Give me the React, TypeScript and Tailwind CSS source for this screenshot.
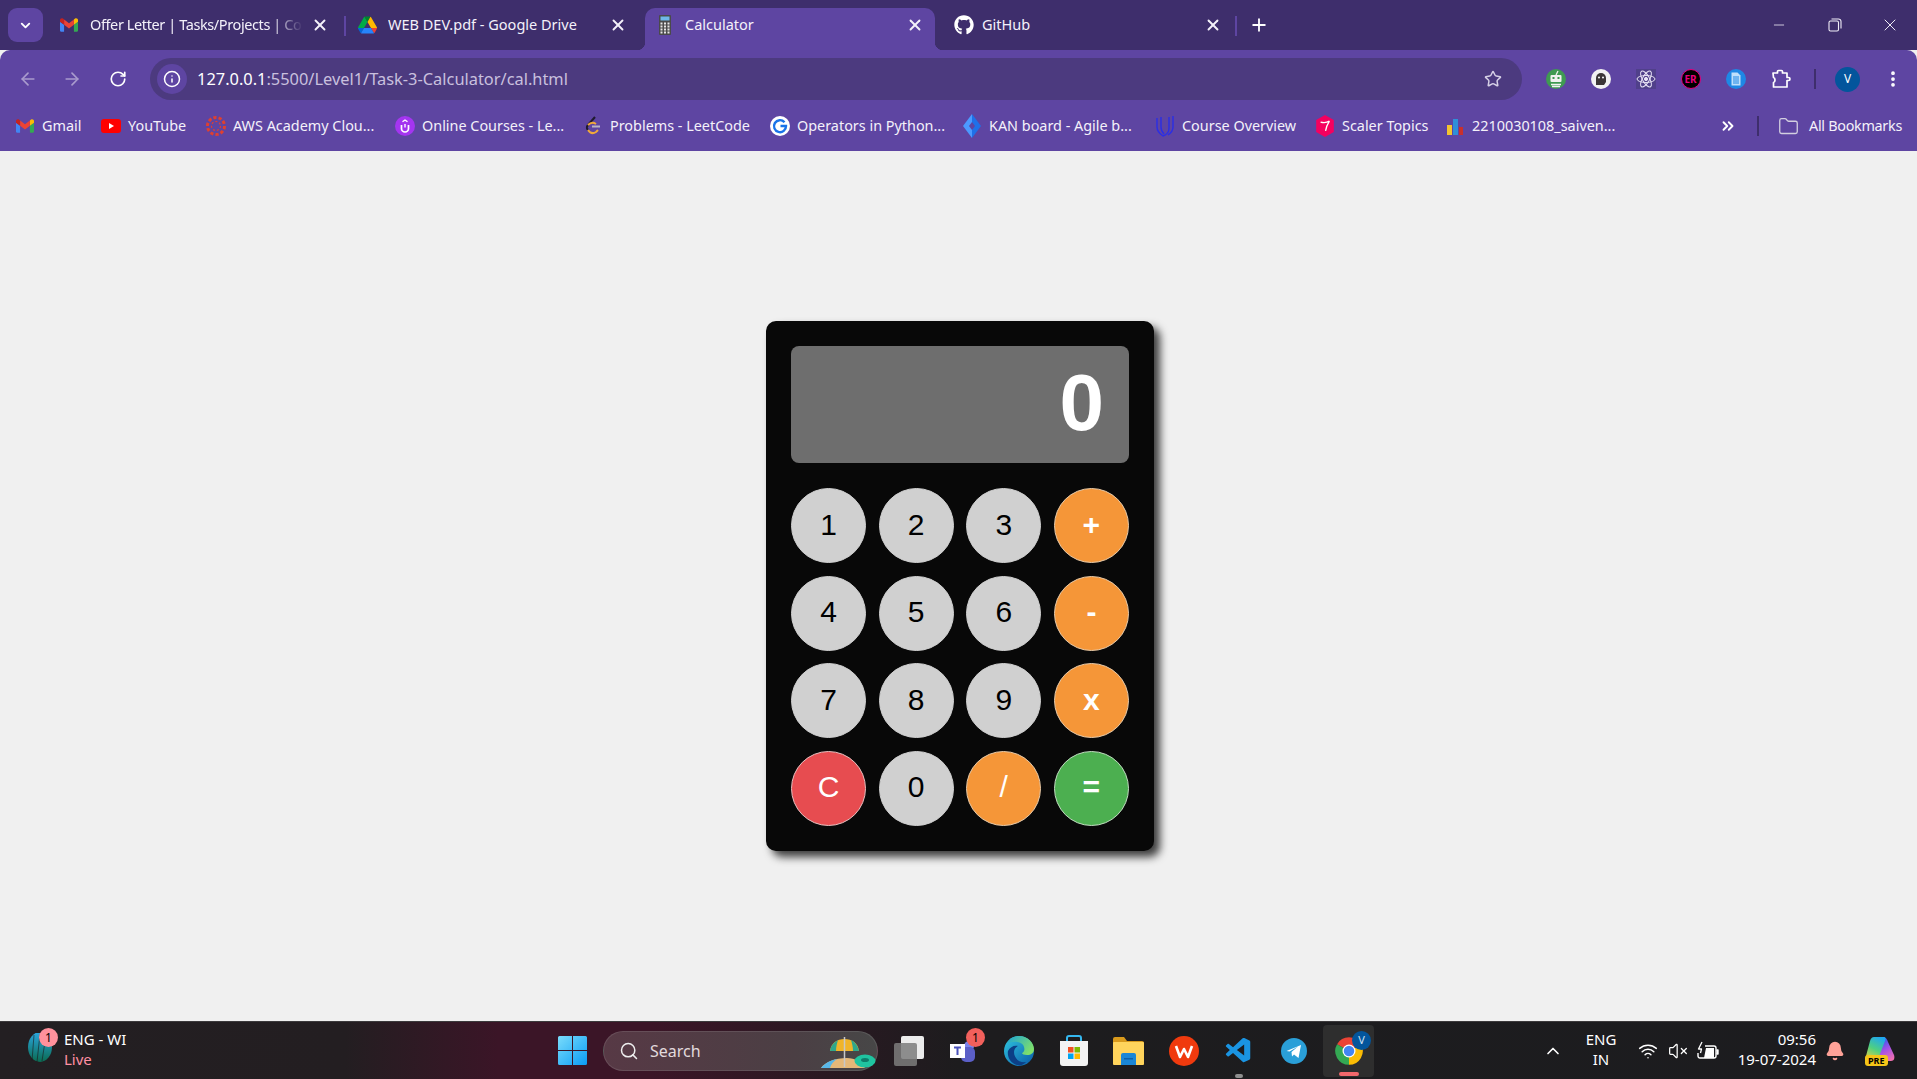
import type { ReactNode } from "react";
import {
  ArrowLeft,
  ArrowRight,
  Bell,
  ChevronDown,
  ChevronUp,
  ChevronsRight,
  EllipsisVertical,
  Folder,
  Info,
  Minus,
  Plus,
  RotateCw,
  Search,
  Star,
  VolumeX,
  Wifi,
  X,
} from "lucide-react";
import { FaGithub } from "react-icons/fa";
import { VscVscode } from "react-icons/vsc";

const Gmail = ({ size = 18 }: { size?: number }) => (
  <svg width={size} height={size} viewBox="52 42 88 66">
    <path fill="#4285f4" d="M58 108h14V74L52 59v43c0 3.32 2.69 6 6 6" />
    <path fill="#34a853" d="M120 108h14c3.32 0 6-2.69 6-6V59l-20 15" />
    <path fill="#fbbc04" d="M120 48v26l20-15v-8c0-7.42-8.47-11.65-14.4-7.2" />
    <path fill="#ea4335" d="M72 74V48l24 18 24-18v26L96 92" />
    <path fill="#c5221f" d="M52 51v8l20 15V48l-5.6-4.2c-5.94-4.45-14.4-.22-14.4 7.2" />
  </svg>
);

const Drive = () => (
  <svg width="19" height="18" viewBox="0 0 87.3 78">
    <path d="m6.6 66.85 3.85 6.65c.8 1.4 1.95 2.5 3.3 3.3l13.75-23.8h-27.5c0 1.55.4 3.1 1.2 4.5z" fill="#0066da" />
    <path d="m43.65 25-13.75-23.8c-1.35.8-2.5 1.9-3.3 3.3l-25.4 44a9.06 9.06 0 0 0 -1.2 4.5h27.5z" fill="#00ac47" />
    <path d="m73.55 76.8c1.35-.8 2.5-1.9 3.3-3.3l1.6-2.75 7.65-13.25c.8-1.4 1.2-2.95 1.2-4.5h-27.502l5.852 11.5z" fill="#ea4335" />
    <path d="m43.65 25 13.75-23.8c-1.35-.8-2.9-1.2-4.5-1.2h-18.5c-1.6 0-3.15.45-4.5 1.2z" fill="#00832d" />
    <path d="m59.8 53h-32.3l-13.75 23.8c1.35.8 2.9 1.2 4.5 1.2h50.8c1.6 0 3.15-.45 4.5-1.2z" fill="#2684fc" />
    <path d="m73.4 26.5-12.7-22c-.8-1.4-1.95-2.5-3.3-3.3l-13.75 23.8 16.15 28h27.45c0-1.55-.4-3.1-1.2-4.5z" fill="#ffba00" />
  </svg>
);

const CalcIcon = () => (
  <svg width="12" height="20" viewBox="0 0 12 20">
    <rect width="12" height="20" rx="1" fill="#4a4a4a" />
    <rect x="1.5" y="1.5" width="9" height="4" fill="#6fb7e8" />
    {[7.5, 10.5, 13.5, 16.5].map((y) =>
      [1.5, 5, 8.5].map((x) => <rect key={`${x}-${y}`} x={x} y={y} width="2" height="2" fill="#e6e6e6" />)
    )}
  </svg>
);

const YouTube = () => (
  <svg width="20" height="14" viewBox="0 0 20 14">
    <rect width="20" height="14" rx="3" fill="#f00" />
    <path d="M8 4l5 3-5 3z" fill="#fff" />
  </svg>
);

const AwsRing = () => (
  <svg width="20" height="20" viewBox="0 0 20 20" fill="none" stroke="#e0402f">
    <circle cx="10" cy="10" r="8.5" strokeWidth="3" strokeDasharray="3.2 2.1" />
    <circle cx="10" cy="10" r="4.5" strokeWidth="1.2" strokeDasharray="2 2" />
  </svg>
);

const OnlineCourses = () => (
  <svg width="20" height="20" viewBox="0 0 20 20">
    <circle cx="10" cy="10" r="10" fill="#a435f0" />
    <path d="M6.5 9v3.5a3.5 3.5 0 0 0 7 0V9" fill="none" stroke="#fff" strokeWidth="1.7" />
    <path d="M10 8V11.5M7.5 5.8L10 4l2.5 1.8" fill="none" stroke="#fff" strokeWidth="1.4" />
  </svg>
);

const LeetCode = () => (
  <svg width="18" height="20" viewBox="0 0 18 20" fill="none" strokeWidth="2">
    <path d="M11 1L4 9" stroke="#1f1a2e" />
    <path d="M4 9c-2 2-1 4 0 5" stroke="#1f1a2e" />
    <path d="M4 14c2 3 5 4 8 2l2-2" stroke="#f0a83a" />
    <path d="M8 10.500h8" stroke="#b9b4c4" />
    <path d="M4 9c2-2 5-3 8-1" stroke="#f0a83a" />
  </svg>
);

const GoogleG = () => (
  <svg width="20" height="20" viewBox="0 0 20 20">
    <circle cx="10" cy="10" r="10" fill="#fff" />
    <path d="M14.5 6.2A6 6 0 1 0 16 10h-5.5" fill="none" stroke="#1a73e8" strokeWidth="2.4" />
  </svg>
);

const KanDiamond = () => (
  <svg width="20" height="24" viewBox="0 0 20 24">
    <path d="M10 0L1 12l9 12z" fill="#4c9aff" />
    <path d="M10 0l9 12-9 12z" fill="#1f70e8" />
    <path d="M10 8l3 4-3 4-3-4z" fill="#5e45a2" />
  </svg>
);

const UShield = () => (
  <svg width="20" height="22" viewBox="0 0 20 22" fill="none" stroke="#2a2ee6" strokeWidth="1.4">
    <path d="M2 3v9c0 4 3 7 6 9 3-1 6-4 6-8V2" />
    <path d="M6 2v10c0 3 1 5 3 7M18 1v11c0 3-2 6-5 8" />
  </svg>
);

const Scaler = () => (
  <svg width="20" height="22" viewBox="0 0 18 20">
    <path d="M9 0l8 4.5v11L9 20l-8-4.5v-11z" fill="#f5005f" />
    <path d="M5 6.5c3 .8 6 .3 8-1-2 3-3 6-3.5 9" fill="none" stroke="#fff" strokeWidth="1.2" />
  </svg>
);

const SheetBars = () => (
  <svg width="18" height="18" viewBox="0 0 18 18">
    <rect x="1" y="8" width="5" height="10" fill="#f4c430" />
    <rect x="7" y="2" width="5" height="16" fill="#2f8fd8" />
    <rect x="13" y="10" width="4" height="8" fill="#c9302c" />
  </svg>
);

const RobotExt = () => (
  <svg width="20" height="20" viewBox="0 0 20 20">
    <circle cx="10" cy="10" r="10" fill="#3f9a52" />
    <rect x="4.5" y="6" width="11" height="7" rx="1" fill="#f1f1f1" />
    <rect x="6.5" y="8" width="2" height="2" fill="#3f9a52" />
    <rect x="11.5" y="8" width="2" height="2" fill="#3f9a52" />
    <path d="M10 6l2-4M5 15.5h10M6 17.5h8" stroke="#f1f1f1" strokeWidth="1.3" />
  </svg>
);

const GhostExt = () => (
  <svg width="20" height="20" viewBox="0 0 20 20">
    <circle cx="10" cy="10" r="10" fill="#f2f2f2" />
    <path d="M5 16V9a5 5 0 0 1 10 0v4l-2 3z" fill="#3b3636" />
    <circle cx="8" cy="8.5" r="1" fill="#fff" />
    <circle cx="12" cy="8.5" r="1" fill="#fff" />
  </svg>
);

const AtomExt = () => (
  <div className="flex size-5 items-center justify-center bg-[#50408a]">
    <svg width="20" height="20" viewBox="0 0 20 20" fill="none" stroke="#e8e3f5" strokeWidth="1">
      <ellipse cx="10" cy="10" rx="9" ry="3.5" />
      <ellipse cx="10" cy="10" rx="9" ry="3.5" transform="rotate(60 10 10)" />
      <ellipse cx="10" cy="10" rx="9" ry="3.5" transform="rotate(120 10 10)" />
      <circle cx="10" cy="10" r="1.6" fill="#e8e3f5" />
    </svg>
  </div>
);

const DocExt = () => (
  <svg width="20" height="20" viewBox="0 0 20 20">
    <circle cx="10" cy="10" r="10" fill="#1e88e5" />
    <path d="M5.5 3.5h6l3 3v10h-9z" fill="#bfe0fb" />
    <path d="M7 8h6M7 10h6M7 12h6M7 14h6" stroke="#1e88e5" strokeWidth="1" />
  </svg>
);

const PuzzleIcon = () => (
  <svg width="20" height="20" viewBox="0 0 20 20" fill="none" stroke="#fff" strokeWidth="1.7" strokeLinejoin="round">
    <path d="M2 4h4.500V2.500a1 1 0 0 1 1-1h3a1 1 0 0 1 1 1V4H16v4.500h1.500a1.500 1.500 0 0 1 0 3H16V18H2.500v-4.500c2-.5 2-4.500 0-5z" />
  </svg>
);

const RestoreIcon = () => (
  <svg width="14" height="14" viewBox="0 0 14 14" fill="none" stroke="#f0edf7" strokeWidth="1.1">
    <rect x="1" y="3" width="9.500" height="10" rx="1.500" />
    <path d="M3.500 1h7a2.500 2.500 0 0 1 2.500 2.500v7" />
  </svg>
);

const WeatherBall = () => (
  <svg width="26" height="30" viewBox="0 0 26 30">
    <defs>
      <linearGradient id="wb" x1="0" y1="0" x2="0" y2="1">
        <stop offset="0" stopColor="#2aa7df" />
        <stop offset="1" stopColor="#0b6b52" />
      </linearGradient>
    </defs>
    <ellipse cx="13" cy="14" rx="12" ry="15" fill="url(#wb)" />
    <path d="M7 2l-2 26M13 1l-3 28M19 2l-4 26" stroke="#1c1a1d" strokeWidth="1" opacity="0.6" />
  </svg>
);

const WindowsLogo = () => (
  <svg width="29" height="29" viewBox="0 0 29 29">
    <defs>
      <linearGradient id="win" x1="0" y1="0" x2="1" y2="1">
        <stop offset="0" stopColor="#7adcfb" />
        <stop offset="1" stopColor="#0a9cf5" />
      </linearGradient>
    </defs>
    <path d="M1.500 0H14v14H0V1.500A1.500 1.500 0 0 1 1.500 0zM15 0h12.500A1.500 1.500 0 0 1 29 1.500V14H15zM0 15h14v14H1.500A1.500 1.500 0 0 1 0 27.500zM15 15h14v12.500a1.500 1.500 0 0 1-1.500 1.500H15z" fill="url(#win)" />
  </svg>
);

const BeachIcon = () => (
  <svg width="56" height="32" viewBox="0 0 56 32">
    <path d="M0 31c4-6 14-10 26-10 8 0 14 4 18 10z" fill="#e5b878" />
    <path d="M0 31c4-5 10-8 16-9-3 2-6 5-7 9z" fill="#58b7e8" />
    <path d="M9 14C10 6 16 2 23.500 2S37 6 38 14z" fill="#f0b429" />
    <path d="M9 14c1-5 3-8 8-11-1 3-2 7-2 11zM32 14c0-4-1-8-2-11 4 2 7 6 8 11z" fill="#2fa88c" />
    <path d="M23.500 0v30" stroke="#c8c8c8" strokeWidth="1.500" />
    <ellipse cx="44" cy="24" rx="10.500" ry="6.500" fill="#1fc4a0" />
    <ellipse cx="44" cy="23" rx="4" ry="2" fill="#0f7d6b" />
  </svg>
);

const TaskView = () => (
  <div className="relative size-[30px]">
    <div className="absolute top-0 right-0 size-[23px] rounded-[2px] bg-[#ececec]" />
    <div className="absolute bottom-0 left-0 size-[23px] rounded-[2px] bg-[#7d7d7d]/85" />
  </div>
);

const Teams = () => (
  <svg width="28" height="24" viewBox="0 0 28 24">
    <circle cx="19" cy="7" r="5" fill="#7b83eb" />
    <rect x="11" y="8" width="14" height="15" rx="5" fill="#5b5fc7" />
    <rect x="0" y="5" width="15" height="14" fill="#fff" />
    <path d="M4 8.500h7M7.500 8.500V16" stroke="#4b53bc" strokeWidth="2" />
  </svg>
);

const Edge = () => (
  <svg width="30" height="30" viewBox="0 0 30 30">
    <defs>
      <linearGradient id="edgeA" x1="0" y1="0" x2="1" y2="1">
        <stop offset="0" stopColor="#2fc7e0" />
        <stop offset="1" stopColor="#0a5aa8" />
      </linearGradient>
      <linearGradient id="edgeB" x1="0" y1="0" x2="1" y2="0.600">
        <stop offset="0" stopColor="#1ba3d6" />
        <stop offset="1" stopColor="#7fe06a" />
      </linearGradient>
    </defs>
    <circle cx="15" cy="15" r="15" fill="url(#edgeA)" />
    <path d="M3 7C6 2 11 0 15 0c9 0 15 7 15 13 0 4-3 6-7 6-3 0-5-1-5-2 2-1 3-3 2-6-1-4-6-6-11-5-3 0-5 1-6 1z" fill="url(#edgeB)" />
    <path d="M10 16c0 6 5 11 12 10-3 3-6 4-9 3C6 27 3 20 4 15c2-4 6-6 10-5-2 1-4 3-4 6z" fill="#0c3f86" />
  </svg>
);

const StoreIcon = () => (
  <svg width="30" height="32" viewBox="0 0 30 32">
    <path d="M8 7V3a2 2 0 0 1 2-2h10a2 2 0 0 1 2 2v4" fill="none" stroke="#35b8f0" strokeWidth="2" />
    <path d="M1 6h28v22a3 3 0 0 1-3 3H4a3 3 0 0 1-3-3z" fill="#f3f3f3" />
    <rect x="9" y="12" width="5.500" height="5.500" fill="#f25022" />
    <rect x="15.500" y="12" width="5.500" height="5.500" fill="#7fba00" />
    <rect x="9" y="18.500" width="5.500" height="5.500" fill="#00a4ef" />
    <rect x="15.500" y="18.500" width="5.500" height="5.500" fill="#ffb900" />
  </svg>
);

const Explorer = () => (
  <svg width="31" height="28" viewBox="0 0 31 28">
    <path d="M0 2a2 2 0 0 1 2-2h9l3 4h15a2 2 0 0 1 2 2v4H0z" fill="#d99a1c" />
    <rect y="5" width="31" height="23" rx="1" fill="#ffd45c" />
    <path d="M8 18a2 2 0 0 1 2-2h11a2 2 0 0 1 2 2v10H8z" fill="#1a86d6" />
    <rect x="11" y="21" width="9" height="1.500" fill="#0c5fa8" />
  </svg>
);

const Wps = () => (
  <svg width="30" height="30" viewBox="0 0 30 30">
    <circle cx="15" cy="15" r="15" fill="#f03a0e" />
    <path d="M7 10l4 11 4-8 4 8 4-11" fill="none" stroke="#fff" strokeWidth="2.600" strokeLinejoin="round" />
  </svg>
);

const Telegram = () => (
  <svg width="26" height="26" viewBox="0 0 26 26">
    <circle cx="13" cy="13" r="13" fill="#2a9fd8" />
    <path d="M5.500 13L20 7l-2.500 13-4.500-3.500-2 2-.5-4.500 6.500-5.500-8.500 5z" fill="#fff" />
  </svg>
);

const Chrome = () => (
  <svg width="30" height="30" viewBox="0 0 24 24">
    <path d="M12 12L2.470 6.500A11 11 0 0 1 21.530 6.500Z" fill="#ea4335" />
    <path d="M12 12L21.530 6.500A11 11 0 0 1 12 23Z" fill="#fbbc04" />
    <path d="M12 12L12 23A11 11 0 0 1 2.470 6.500Z" fill="#34a853" />
    <circle cx="12" cy="12" r="5.200" fill="#fff" />
    <circle cx="12" cy="12" r="4.200" fill="#4285f4" />
  </svg>
);

const BatteryBolt = () => (
  <svg width="22" height="20" viewBox="0 0 22 20" fill="none" stroke="#fff" strokeWidth="1.400" strokeLinejoin="round">
    <path d="M8 5h9a2 2 0 0 1 2 2v8a2 2 0 0 1-2 2H3a2 2 0 0 1-2-2v-3" />
    <path d="M19.500 9h1.500v4h-1.500" fill="#fff" />
    <path d="M3 9v3M7 17h10V7H9z" fill="#fff" stroke="none" />
    <path d="M5 1L1.500 8h3l-1 4" strokeWidth="1.300" />
  </svg>
);

const Copilot = () => (
  <svg width="30" height="30" viewBox="0 0 30 30">
    <defs>
      <linearGradient id="copA" x1="0.700" y1="0" x2="0.300" y2="1">
        <stop offset="0" stopColor="#1fa8f0" />
        <stop offset="0.500" stopColor="#4fd080" />
        <stop offset="1" stopColor="#f0d040" />
      </linearGradient>
      <linearGradient id="copB" x1="0.300" y1="0" x2="0.700" y2="1">
        <stop offset="0" stopColor="#1f5fe8" />
        <stop offset="0.500" stopColor="#a050e8" />
        <stop offset="1" stopColor="#f070b0" />
      </linearGradient>
    </defs>
    <path d="M15 1h3c3 0 4 2 5 5l6 13c1 3 0 6-3 6H13z" fill="url(#copB)" />
    <path d="M9 1h9c3 0 3 2 2 4l-7 18c-1 2-2 3-5 3H5c-4 0-5-3-4-6L5 5c1-3 2-4 4-4z" fill="url(#copA)" />
  </svg>
);

type TabProps = {
  title: string;
  icon: ReactNode;
  width: string;
  iconBox: string;
  closeGap: string;
  active?: boolean;
  fade?: boolean;
};

const Tab = ({ title, icon, width, iconBox, closeGap, active, fade }: TabProps) => (
  <div className={`relative flex h-[42px] shrink-0 items-center pb-2 ${width} ${active ? "rounded-t-[10px] bg-[#5e45a2]" : ""}`}>
    {active && (
      <>
        <span className="absolute bottom-0 -left-2 size-2 bg-[radial-gradient(circle_at_0_0,transparent_8px,#5e45a2_8.500px)]" />
        <span className="absolute -right-2 bottom-0 size-2 bg-[radial-gradient(circle_at_100%_0,transparent_8px,#5e45a2_8.500px)]" />
      </>
    )}
    <div className={`flex shrink-0 items-center justify-center ${iconBox}`}>{icon}</div>
    <span
      className={`min-w-0 flex-1 overflow-hidden text-[14.500px] whitespace-nowrap text-[#f4f1fa] ${
        fade ? "tracking-[-0.4px] [mask-image:linear-gradient(to_right,black_85%,transparent)]" : ""
      }`}
    >
      {title}
    </span>
    <X className={`ml-2 shrink-0 text-[#f4f1fa] ${closeGap}`} size={18} strokeWidth={2.500} />
  </div>
);

const TabSep = () => <div className="mt-2 h-5 w-[2px] shrink-0 bg-[#5e45a2]" />;

const bookmarks: { label: string; icon: ReactNode; width: string }[] = [
  { label: "Gmail", icon: <Gmail />, width: "w-[86px]" },
  { label: "YouTube", icon: <YouTube />, width: "w-[105px]" },
  { label: "AWS Academy Clou...", icon: <AwsRing />, width: "w-[189px]" },
  { label: "Online Courses - Le...", icon: <OnlineCourses />, width: "w-[188px]" },
  { label: "Problems - LeetCode", icon: <LeetCode />, width: "w-[187px]" },
  { label: "Operators in Python...", icon: <GoogleG />, width: "w-[192px]" },
  { label: "KAN board - Agile b...", icon: <KanDiamond />, width: "w-[193px]" },
  { label: "Course Overview", icon: <UShield />, width: "w-[160px]" },
  { label: "Scaler Topics", icon: <Scaler />, width: "w-[130px]" },
  { label: "2210030108_saiven...", icon: <SheetBars />, width: "w-[172px]" },
];

const extensions = [<RobotExt />, <GhostExt />, <AtomExt />];

const keys = [
  { label: "1" },
  { label: "2" },
  { label: "3" },
  { label: "+", tone: "op", bold: true },
  { label: "4" },
  { label: "5" },
  { label: "6" },
  { label: "-", tone: "op", bold: true },
  { label: "7" },
  { label: "8" },
  { label: "9" },
  { label: "x", tone: "op", bold: true },
  { label: "C", tone: "clear" },
  { label: "0" },
  { label: "/", tone: "op" },
  { label: "=", tone: "equals", bold: true },
];

const keyTone: Record<string, string> = {
  num: "bg-[#d0d0d0] text-black border-[#d0d0d0]",
  op: "bg-[#f59638] text-white border-[#e6c9a8]",
  clear: "bg-[#e74c50] text-white border-[#e6c0c0]",
  equals: "bg-[#4caf50] text-white border-[#c0dcc0]",
};

const Calculator = () => (
  <div className="w-[388px] rounded-[10px] bg-[#080808] p-[25px] shadow-[6px_6px_8px_rgba(0,0,0,0.75)] [font-family:'Liberation_Sans',sans-serif]">
    <div className="mb-[25px] flex h-[117px] items-center justify-end rounded-[8px] bg-[#6e6e6e] px-[25px] pb-1 text-[80px] leading-none font-bold text-white">
      0
    </div>
    <div className="grid grid-cols-4 gap-[12.500px]">
      {keys.map((k) => (
        <button
          key={k.label}
          className={`flex size-[75px] items-center justify-center rounded-full border pb-[2px] text-[30px] leading-none ${keyTone[k.tone ?? "num"]} ${k.bold ? "font-bold" : ""}`}
        >
          {k.label}
        </button>
      ))}
    </div>
  </div>
);

const Slot = ({ children, className = "" }: { children: ReactNode; className?: string }) => (
  <div className={`relative flex h-full shrink-0 items-center justify-center ${className}`}>{children}</div>
);

const App = () => (
  <div className="flex h-[1079px] w-full flex-col overflow-hidden bg-[#f0f0f0] [font-family:'Noto_Sans',sans-serif]">
    {/* tab strip */}
    <div className="flex h-[50px] shrink-0 items-start bg-[#3e2e6c] pt-2 pl-2">
      <div className="mr-1 flex h-[34px] w-[35px] shrink-0 items-center justify-center rounded-[9px] bg-[#5e45a2]">
        <ChevronDown size={15} strokeWidth={3} className="text-white" />
      </div>
      <Tab title="Offer Letter | Tasks/Projects | Compa" icon={<Gmail />} width="w-[297px]" iconBox="w-[43px]" closeGap="mr-[15px]" fade />
      <TabSep />
      <Tab title="WEB DEV.pdf - Google Drive" icon={<Drive />} width="w-[299px]" iconBox="w-[42px]" closeGap="mr-[18px]" />
      <Tab title="Calculator" icon={<CalcIcon />} width="w-[290px]" iconBox="w-[40px]" closeGap="mr-[11px]" active />
      <Tab title="GitHub" icon={<FaGithub size={20} className="text-white" />} width="w-[300px]" iconBox="w-[47px] pl-[10px]" closeGap="mr-[13px]" />
      <TabSep />
      <div className="ml-[12px] flex h-[34px] items-center">
        <Plus size={20} strokeWidth={2.200} className="text-white" />
      </div>
      <div className="ml-auto flex h-[34px] items-center">
        <div className="flex w-[56px] justify-center">
          <Minus size={16} strokeWidth={1.200} className="text-[#f0edf7]" />
        </div>
        <div className="flex w-[56px] justify-center">
          <RestoreIcon />
        </div>
        <div className="flex w-[54px] justify-center">
          <X size={20} strokeWidth={1.200} className="text-[#f0edf7]" />
        </div>
      </div>
    </div>

    {/* toolbar */}
    <div className="flex h-[51px] shrink-0 items-center rounded-t-[10px] bg-[#5e45a2] pt-2 pb-[1px] pl-[6px]">
      <Slot className="w-11">
        <ArrowLeft size={20} className="text-[#a99bcd]" />
      </Slot>
      <Slot className="w-11">
        <ArrowRight size={20} className="text-[#a99bcd]" />
      </Slot>
      <Slot className="ml-[2px] w-11">
        <RotateCw size={18} strokeWidth={2.200} className="text-white" />
      </Slot>
      <div className="ml-[10px] flex h-[42px] min-w-0 flex-1 items-center rounded-full bg-[#4c3a7f] pr-[20px] pl-[7px]">
        <div className="flex size-[30px] shrink-0 items-center justify-center rounded-full bg-[#5e45a2]">
          <Info size={18} strokeWidth={2} className="text-white" />
        </div>
        <span className="ml-[10px] text-[16.400px] text-[#c9c0de]">
          <span className="text-white">127.0.0.1</span>:5500/Level1/Task-3-Calculator/cal.html
        </span>
        <Star size={18} strokeWidth={2} className="ml-auto text-[#d6d0e6]" />
      </div>
      <div className="ml-[11px] flex h-full shrink-0">
        {extensions.map((icon, i) => (
          <Slot key={i} className="w-[45px]">
            {icon}
          </Slot>
        ))}
        <Slot className="w-[45px]">
          <div className="flex size-5 items-center justify-center rounded-full border border-[#e6007e] bg-black text-[10px] font-bold text-[#e6007e]">
            ER
          </div>
        </Slot>
        <Slot className="w-[45px]">
          <DocExt />
        </Slot>
        <Slot className="w-[45px]">
          <PuzzleIcon />
        </Slot>
      </div>
      <div className="ml-[11px] h-5 w-[2px] shrink-0 bg-[#3e2e6c]" />
      <Slot className="w-[63px]">
        <div className="flex size-[25px] items-center justify-center rounded-full bg-[#03559c] text-[12px] text-white">V</div>
      </Slot>
      <Slot className="w-[27px]">
        <EllipsisVertical size={20} strokeWidth={2.500} className="text-white" />
      </Slot>
      <div className="w-[11px] shrink-0" />
    </div>

    {/* bookmarks */}
    <div className="flex h-[50px] shrink-0 items-center bg-[#5e45a2] pr-[15px] pl-[15px] text-[14.400px] text-[#f4f1fa]">
      {bookmarks.map((b) => (
        <div key={b.label} className={`flex shrink-0 items-center whitespace-nowrap ${b.width}`}>
          <div className="mr-[7px] flex w-[20px] shrink-0 items-center justify-center">{b.icon}</div>
          <span>{b.label}</span>
        </div>
      ))}
      <ChevronsRight size={18} strokeWidth={2.500} className="ml-auto text-white" />
      <div className="ml-[20px] h-5 w-[2px] bg-[#3e2e6c]" />
      <Folder size={21} strokeWidth={1.500} className="mr-[10px] ml-[19px] text-[#d3cfe0]" />
      <span className="tracking-[-0.3px] whitespace-nowrap">All Bookmarks</span>
    </div>

    {/* page */}
    <main className="flex flex-1 items-center justify-center pl-[3px]">
      <Calculator />
    </main>

    {/* taskbar */}
    <div className="flex h-[58px] shrink-0 items-center border-t border-[#3c3a3c] bg-[linear-gradient(90deg,#231f22_0%,#231e21_18%,#3b1527_26%,#3b1527_34%,#1d1c1e_50%,#1c1c1f_100%)] text-[15px] text-white">
      <div className="flex w-[558px] shrink-0 items-center pl-[27px]">
        <div className="relative mb-[5px]">
          <WeatherBall />
          <span className="absolute -top-[5px] -right-[5px] flex size-[19px] items-center justify-center rounded-full bg-[#ff919c] text-[12px] text-black">
            1
          </span>
        </div>
        <div className="mb-[4px] ml-[11px] flex flex-col leading-[20px]">
          <span>ENG - WI</span>
          <span className="text-[#ff8fa3]">Live</span>
        </div>
      </div>
      <WindowsLogo />
      <div className="ml-[16px] flex h-[40px] w-[275px] shrink-0 items-center rounded-full border border-white/10 bg-[linear-gradient(90deg,#573945,#4b3f44_70%,#474747)] pl-[15px]">
        <Search size={20} strokeWidth={1.800} className="text-[#eee]" />
        <span className="ml-[11px] text-[16px] text-[#e2dadd]">Search</span>
        <div className="mt-[4px] ml-auto">
          <BeachIcon />
        </div>
      </div>
      <div className="ml-[3px] flex h-full shrink-0">
        <Slot className="w-[55px]">
          <TaskView />
        </Slot>
        <Slot className="w-[55px]">
          <Teams />
          <span className="absolute top-[6px] left-[30px] flex size-[19px] items-center justify-center rounded-full bg-[#f2605c] text-[12px] text-black">
            1
          </span>
        </Slot>
        <Slot className="w-[55px]">
          <Edge />
        </Slot>
        <Slot className="w-[55px]">
          <StoreIcon />
        </Slot>
        <Slot className="w-[55px]">
          <Explorer />
        </Slot>
        <Slot className="w-[55px]">
          <Wps />
        </Slot>
        <Slot className="w-[55px]">
          <VscVscode size={30} className="text-[#1a94e2]" />
          <span className="absolute bottom-[1px] h-[4px] w-[8px] rounded-full bg-[#8e8e8e]" />
        </Slot>
        <Slot className="w-[55px]">
          <Telegram />
        </Slot>
        <Slot className="w-[55px]">
          <div className="absolute inset-x-[2px] top-[3px] bottom-[2px] rounded-[4px] bg-[#2e2e2e]" />
          <div className="relative">
            <Chrome />
          </div>
          <span className="absolute top-[9px] right-[5px] flex size-[19px] items-center justify-center rounded-full bg-[#03559c] text-[11px] text-[#cfe2f5]">
            V
          </span>
          <span className="absolute bottom-[3px] h-[4px] w-[20px] rounded-full bg-[#f2686c]" />
        </Slot>
      </div>
      <div className="ml-auto flex h-full shrink-0 items-center pr-[11px]">
        <Slot className="w-[40px]">
          <ChevronUp size={20} strokeWidth={2} />
        </Slot>
        <Slot className="w-[56px]">
          <div className="mb-[4px] flex flex-col items-center leading-[20px]">
            <span>ENG</span>
            <span>IN</span>
          </div>
        </Slot>
        <Slot className="ml-[4px] w-[30px]">
          <Wifi size={20} strokeWidth={1.800} />
        </Slot>
        <Slot className="w-[30px]">
          <VolumeX size={20} strokeWidth={1.500} />
        </Slot>
        <Slot className="w-[30px]">
          <BatteryBolt />
        </Slot>
        <div className="mb-[4px] flex w-[93px] shrink-0 flex-col items-end leading-[20px]">
          <span>09:56</span>
          <span>19-07-2024</span>
        </div>
        <Slot className="w-[38px]">
          <Bell size={20} className="fill-[#ffa298] text-[#ffa298]" />
        </Slot>
        <Slot className="w-[52px]">
          <Copilot />
          <span className="absolute top-[33px] left-[11px] rounded-[3px] bg-[#f5c518] px-[3px] text-[9px] leading-[11px] font-bold text-black">
            PRE
          </span>
        </Slot>
      </div>
    </div>
  </div>
);

export default App;
